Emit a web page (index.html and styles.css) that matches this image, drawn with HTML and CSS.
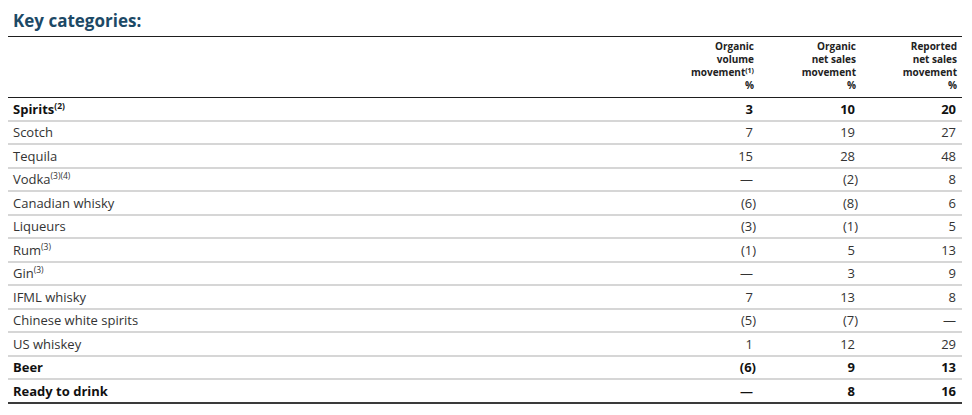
FILE: index.html
```html
<!DOCTYPE html>
<html lang="en">
<head>
<meta charset="utf-8">
<title>Key categories</title>
<link rel="stylesheet" href="styles.css">
</head>
<body>
<section class="panel">
  <h2 class="title">Key categories:</h2>
  <div class="table">
    <div class="row head">
      <div class="cell label"></div>
      <div class="cell num">Organic<br>volume<br>movement<sup>(1)</sup><br>%</div>
      <div class="cell num">Organic<br>net sales<br>movement<br>%</div>
      <div class="cell num">Reported<br>net sales<br>movement<br>%</div>
    </div>
    <div class="row strong">
      <div class="cell label">Spirits<sup>(2)</sup></div>
      <div class="cell num">3</div><div class="cell num">10</div><div class="cell num">20</div>
    </div>
    <div class="row">
      <div class="cell label">Scotch</div>
      <div class="cell num">7</div><div class="cell num">19</div><div class="cell num">27</div>
    </div>
    <div class="row">
      <div class="cell label">Tequila</div>
      <div class="cell num">15</div><div class="cell num">28</div><div class="cell num">48</div>
    </div>
    <div class="row">
      <div class="cell label">Vodka<sup>(3)(4)</sup></div>
      <div class="cell num">—</div><div class="cell num neg">(2)</div><div class="cell num">8</div>
    </div>
    <div class="row">
      <div class="cell label">Canadian whisky</div>
      <div class="cell num neg">(6)</div><div class="cell num neg">(8)</div><div class="cell num">6</div>
    </div>
    <div class="row">
      <div class="cell label">Liqueurs</div>
      <div class="cell num neg">(3)</div><div class="cell num neg">(1)</div><div class="cell num">5</div>
    </div>
    <div class="row">
      <div class="cell label">Rum<sup>(3)</sup></div>
      <div class="cell num neg">(1)</div><div class="cell num">5</div><div class="cell num">13</div>
    </div>
    <div class="row">
      <div class="cell label">Gin<sup>(3)</sup></div>
      <div class="cell num">—</div><div class="cell num">3</div><div class="cell num">9</div>
    </div>
    <div class="row">
      <div class="cell label">IFML whisky</div>
      <div class="cell num">7</div><div class="cell num">13</div><div class="cell num">8</div>
    </div>
    <div class="row">
      <div class="cell label">Chinese white spirits</div>
      <div class="cell num neg">(5)</div><div class="cell num neg">(7)</div><div class="cell num">—</div>
    </div>
    <div class="row">
      <div class="cell label">US whiskey</div>
      <div class="cell num">1</div><div class="cell num">12</div><div class="cell num">29</div>
    </div>
    <div class="row strong">
      <div class="cell label">Beer</div>
      <div class="cell num neg">(6)</div><div class="cell num">9</div><div class="cell num">13</div>
    </div>
    <div class="row strong last">
      <div class="cell label">Ready to drink</div>
      <div class="cell num">—</div><div class="cell num">8</div><div class="cell num">16</div>
    </div>
  </div>
</section>
</body>
</html>
```

FILE: styles.css
```css
html, body {
  margin: 0;
  padding: 0;
  background: #ffffff;
}

body {
  padding: 8px 10px 8px 8px;
  font-family: "Open Sans", "Noto Sans", "Liberation Sans", sans-serif;
  color: #333333;
}

.panel {
  width: 954px;
}

.title {
  margin: 0;
  padding: 0 0 2px 5px;
  font-size: 17px;
  line-height: 26px;
  font-weight: 700;
  color: #1c4966;
  border-bottom: 1px solid #1e1e1e;
}

.table {
  display: flex;
  flex-direction: column;
}

.row {
  display: grid;
  grid-template-columns: 1fr 101px 102px 101px;
  align-items: center;
  box-sizing: border-box;
  height: 23.5px;
  border-bottom: 2px solid #d6d6d6;
  font-size: 13px;
  line-height: 16px;
}

.row.head {
  height: auto;
  align-items: start;
  padding: 3px 0 5px;
  border-bottom: 1px solid #1e1e1e;
  font-size: 10px;
  line-height: 13px;
  font-weight: 700;
  color: #222222;
}

.row.head .num {
  padding-right: 5px;
}

.row.strong {
  font-weight: 700;
  color: #111111;
}

.row.last {
  border-bottom: 2px solid #3a3a3a;
}

.cell.label {
  padding-left: 5px;
}

.cell.num {
  text-align: right;
  padding-right: 6px;
}

.cell.num.neg {
  padding-right: 3px;
}

sup {
  font-size: 8.5px;
  line-height: 0;
  vertical-align: 5px;
}

.row.head sup {
  font-size: 7px;
  vertical-align: 3px;
}
```
